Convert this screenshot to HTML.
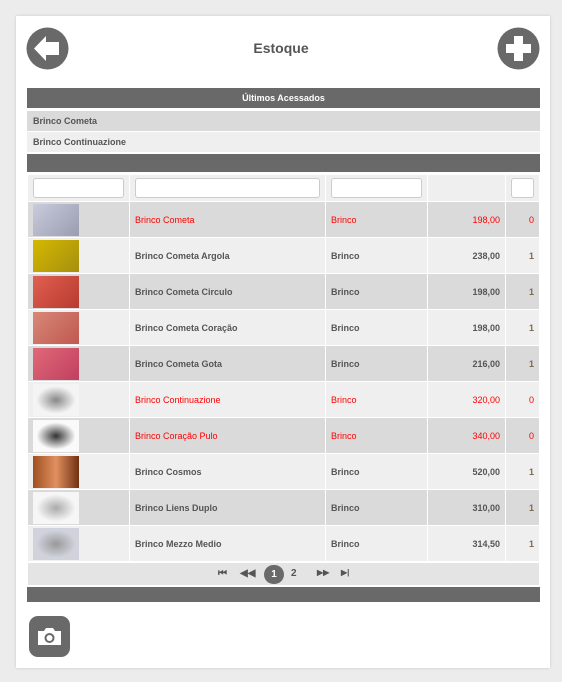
<!DOCTYPE html>
<html><head><style>
*{margin:0;padding:0;box-sizing:border-box}
body{width:562px;height:682px;background:#ececec;font-family:"Liberation Sans",sans-serif;position:relative;overflow:hidden}
.card{position:absolute;left:16px;top:16px;width:534px;height:652px;background:#fff;box-shadow:0 0 3px rgba(0,0,0,.15)}
.abs{position:absolute}
h1{position:absolute;left:0;right:0;top:40px;text-align:center;font-size:14px;font-weight:bold;color:#555}
.bar{position:absolute;left:27px;width:513px;background:#696969;color:#fff;font-size:9px;font-weight:bold;text-align:center}
.rec{position:absolute;left:27px;width:513px;height:20px;font-size:9px;font-weight:bold;color:#555;padding-left:6px;line-height:20px}
table{position:absolute;left:27px;top:174px;width:513px;border-collapse:collapse}
td{border:1px solid #fff;font-size:9px;font-weight:bold;color:#555;padding:0 5px;height:36px}
tr.f td{height:27px;background:#efefef}
tr.f input{display:block;height:20px;border:1px solid #ccc;border-radius:3px;background:#fff;width:100%}
tr:nth-child(even) td{background:#dadada}
tr:nth-child(odd):not(.f) td{background:#efefef}
td.n{text-align:right}
td.q{text-align:right;color:#7d6a4a}
tr.r td{color:#f00;font-weight:normal}
.img{width:46px;height:32px}
</style></head><body>
<div class="card"></div>
<svg class="abs" style="left:26px;top:27px" width="43" height="43" viewBox="0 0 43 43"><circle cx="21.5" cy="21.5" r="21" fill="#696969"/><path d="M8 21.5 L20 9 V15 H33 V28 H20 V34 Z" fill="#fff"/></svg>
<svg class="abs" style="left:497px;top:27px" width="43" height="43" viewBox="0 0 43 43"><circle cx="21.5" cy="21.5" r="21" fill="#696969"/><path d="M17 9h9v8h8v9h-8v8h-9v-8h-8v-9h8z" fill="#fff"/></svg>
<h1>Estoque</h1>
<div class="bar" style="top:88px;height:20px;line-height:20px">Últimos Acessados</div>
<div class="rec" style="top:111px;background:#dadada">Brinco Cometa</div>
<div class="rec" style="top:132px;background:#efefef">Brinco Continuazione</div>
<div class="bar" style="top:154px;height:18px"></div>
<table>
<colgroup><col style="width:102px"><col style="width:196px"><col style="width:102px"><col style="width:78px"><col></colgroup>
<tr class="f"><td><input></td><td><input></td><td><input></td><td></td><td><input></td></tr>
<tr class="r"><td><div class="img" style="background:linear-gradient(135deg,#c9ccdc,#9a9cb0)"></div></td><td>Brinco Cometa</td><td>Brinco</td><td class="n">198,00</td><td class="q">0</td></tr>
<tr><td><div class="img" style="background:linear-gradient(135deg,#d4b800,#a68f10)"></div></td><td>Brinco Cometa Argola</td><td>Brinco</td><td class="n">238,00</td><td class="q">1</td></tr>
<tr><td><div class="img" style="background:linear-gradient(135deg,#e06050,#b83a30)"></div></td><td>Brinco Cometa Circulo</td><td>Brinco</td><td class="n">198,00</td><td class="q">1</td></tr>
<tr><td><div class="img" style="background:linear-gradient(135deg,#d88878,#c05850)"></div></td><td>Brinco Cometa Coração</td><td>Brinco</td><td class="n">198,00</td><td class="q">1</td></tr>
<tr><td><div class="img" style="background:linear-gradient(135deg,#e06878,#c04060)"></div></td><td>Brinco Cometa Gota</td><td>Brinco</td><td class="n">216,00</td><td class="q">1</td></tr>
<tr class="r"><td><div class="img" style="background:radial-gradient(#888,#f4f4f4 60%)"></div></td><td>Brinco Continuazione</td><td>Brinco</td><td class="n">320,00</td><td class="q">0</td></tr>
<tr class="r"><td><div class="img" style="background:radial-gradient(#333,#fafafa 60%)"></div></td><td>Brinco Coração Pulo</td><td>Brinco</td><td class="n">340,00</td><td class="q">0</td></tr>
<tr><td><div class="img" style="background:linear-gradient(90deg,#a05020,#e09060,#703010)"></div></td><td>Brinco Cosmos</td><td>Brinco</td><td class="n">520,00</td><td class="q">1</td></tr>
<tr><td><div class="img" style="background:radial-gradient(#aaa,#f6f6f6 60%)"></div></td><td>Brinco Liens Duplo</td><td>Brinco</td><td class="n">310,00</td><td class="q">1</td></tr>
<tr><td><div class="img" style="background:radial-gradient(#999,#d0d2dc 60%)"></div></td><td>Brinco Mezzo Medio</td><td>Brinco</td><td class="n">314,50</td><td class="q">1</td></tr>
</table>
<div class="abs" style="left:28px;top:563px;width:511px;height:22px;background:#e4e4e4;font-size:10px;font-weight:bold;color:#555">
<span class="abs" style="left:190px;top:5px">⏮</span>
<span class="abs" style="left:212px;top:5px">◀◀</span>
<span class="abs" style="left:236px;top:2px;width:20px;height:19px;border-radius:10px;background:#696969;color:#fff;text-align:center;line-height:19px">1</span>
<span class="abs" style="left:263px;top:5px">2</span>
<span class="abs" style="left:289px;top:5px;font-size:8px">▶▶</span>
<span class="abs" style="left:313px;top:5px;font-size:8px">▶|</span>
</div>
<div class="bar" style="top:587px;height:15px"></div>
<svg class="abs" style="left:29px;top:616px" width="41" height="41" viewBox="0 0 41 41"><rect width="41" height="41" rx="9" fill="#696969"/><path d="M9 15h6l2-3h7l2 3h6v14H9z" fill="#fff"/><circle cx="20.5" cy="22" r="5" fill="#696969"/><circle cx="20.5" cy="22" r="3" fill="#fff"/></svg>
</body></html>
